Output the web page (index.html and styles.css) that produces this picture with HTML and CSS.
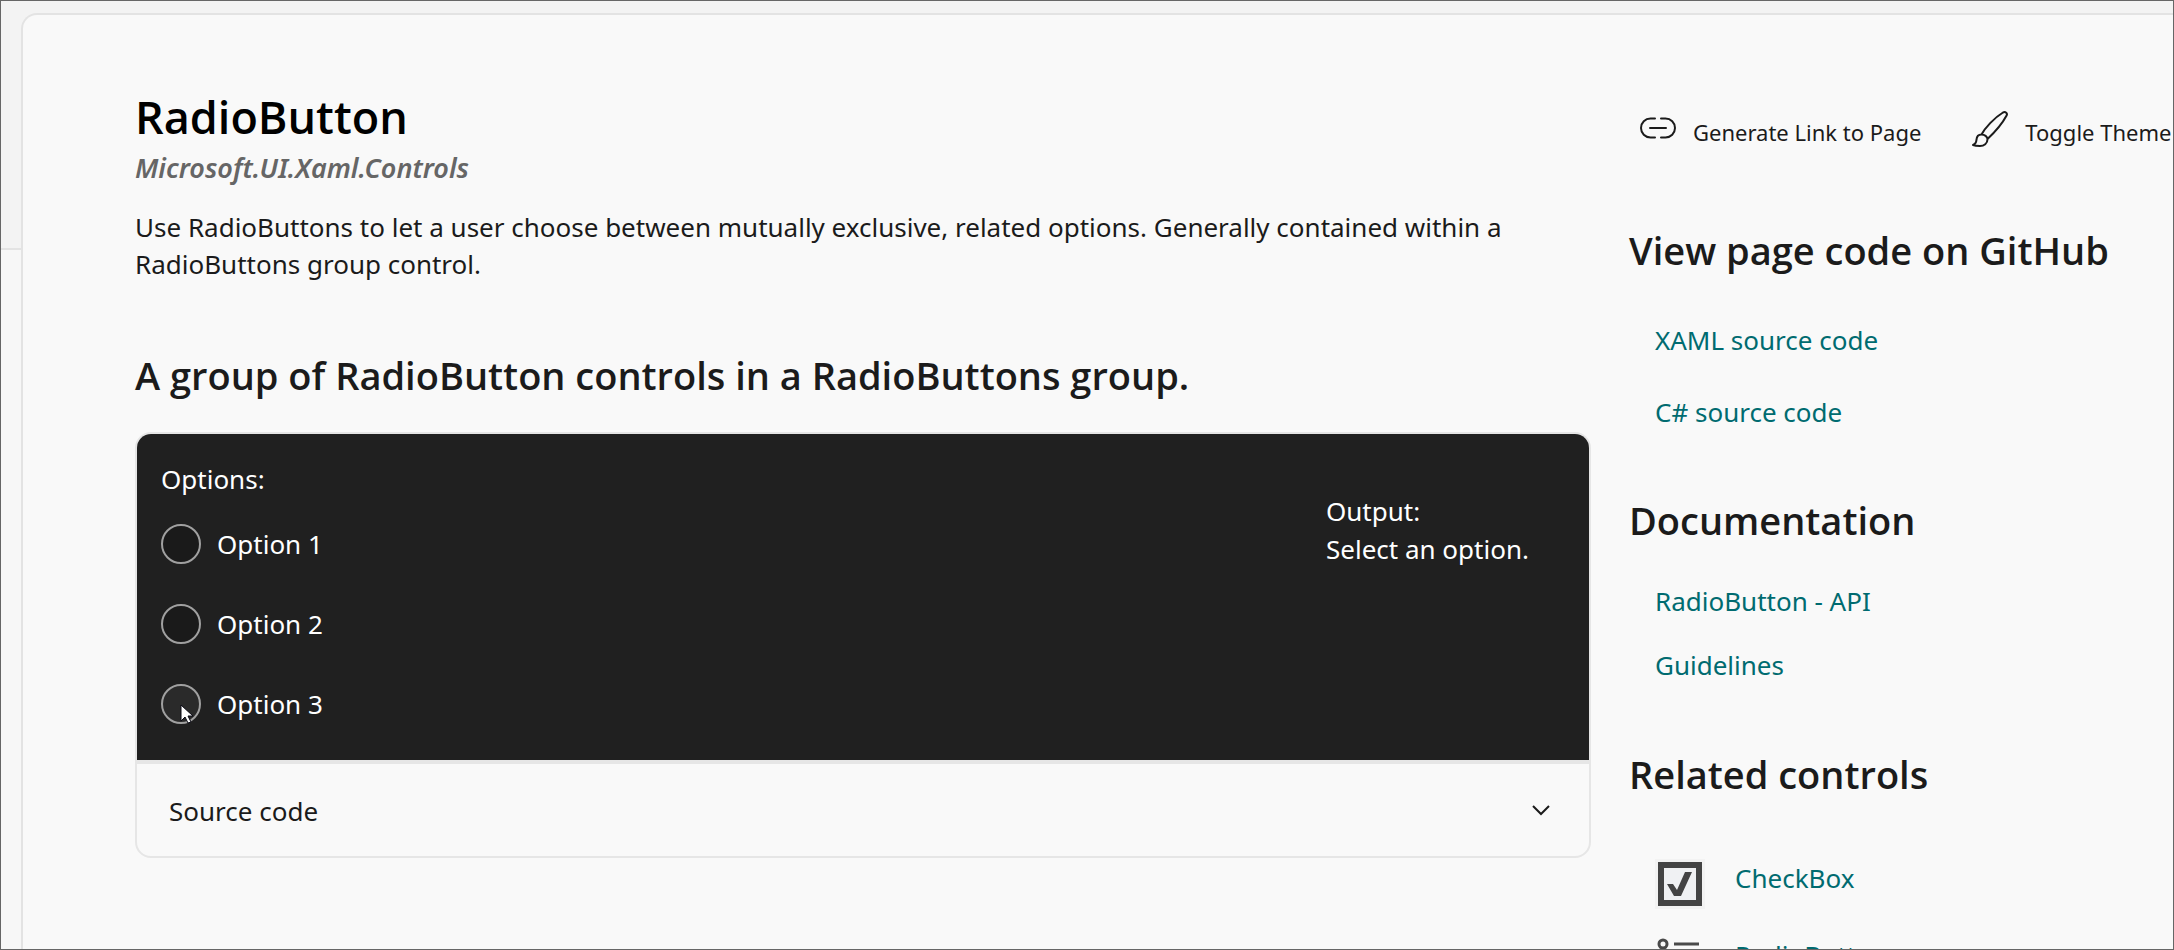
FILE: index.html
```html
<!DOCTYPE html>
<html lang="en">
<head>
    <meta charset="UTF-8">
    <title>RadioButton</title>
    <link rel="stylesheet" href="styles.css">
</head>
<body>

<div class="window">
    <div class="nav-edge"></div>
    <div class="page">
        <main class="content">
            <h1>RadioButton</h1>
            <p class="namespace">Microsoft.UI.Xaml.Controls</p>
            <p class="description">Use RadioButtons to let a user choose between mutually exclusive, related options. Generally contained within a RadioButtons group control.</p>

            <h2 class="example-title">A group of RadioButton controls in a RadioButtons group.</h2>
            <div class="card">
                <div class="example">
                    <fieldset class="options">
                        <legend>Options:</legend>
                        <label class="option"><input type="radio" name="option"> Option 1</label>
                        <label class="option"><input type="radio" name="option"> Option 2</label>
                        <label class="option hover"><input type="radio" name="option"> Option 3
                            <svg class="cursor" width="14" height="21" viewBox="0 0 14 21"><path d="M1 1v16l4-4 3 6 3-1-3-6h5z" fill="#fff" stroke="#0a0a14" stroke-width="1"/></svg>
                        </label>
                    </fieldset>
                    <div class="output">
                        <p>Output:</p>
                        <p>Select an option.</p>
                    </div>
                </div>
                <button class="expander" type="button">
                    <span>Source code</span>
                    <svg width="18" height="12" viewBox="0 0 18 12" fill="none" stroke="#1b1b1b" stroke-width="2"><path d="M1 1l8 8 8-8"/></svg>
                </button>
            </div>
        </main>

        <aside class="sidebar">
            <div class="toolbar">
                <button type="button">
                    <svg width="36" height="36" viewBox="0 0 36 36" fill="none" stroke="#1b1b1b" stroke-width="2" stroke-linecap="round"><path d="M15 7.500h-4.500a9.500 9.500 0 0 0 0 19H15M21 7.500h4.500a9.500 9.500 0 0 1 0 19H21M10 17h16"/></svg>
                    <span>Generate Link to Page</span>
                </button>
                <button type="button">
                    <svg width="36" height="36" viewBox="0 0 36 36" fill="none" stroke="#1b1b1b" stroke-width="2" stroke-linejoin="round"><path d="M9.500 23.500C13 17 22 7 31 1.500c2.500-1.200 4.800.8 3.600 3C30 13 23 21 15.500 28M9.500 23.500c3 0 6 2 6 4.800 0 4.200-3.500 6.700-7.500 6.700-2.500 0-5-.1-7-1 3-1 3.300-3 3.500-5.300.2-3 2-5.200 5-5.200z"/></svg>
                    <span>Toggle Theme</span>
                </button>
            </div>

            <h2>View page code on GitHub</h2>
            <ul class="links source-links">
                <li><a href="#">XAML source code</a></li>
                <li><a href="#">C# source code</a></li>
            </ul>

            <h2>Documentation</h2>
            <ul class="links">
                <li><a href="#">RadioButton - API</a></li>
                <li><a href="#">Guidelines</a></li>
            </ul>

            <h2>Related controls</h2>
            <ul class="links related">
                <li>
                    <svg width="50" height="50" viewBox="0 0 50 50"><path fill="#f3f3f3" d="M0 0h50v50H0z"/><path fill="#f0f1f3" stroke="#444" stroke-width="6" d="M6 6h38v38H6z"/><path fill="#444" d="M12 25h6l4 6 8-18h7L26 37h-7z"/></svg>
                    <a href="#">CheckBox</a>
                </li>
                <li>
                    <svg width="50" height="50" viewBox="0 0 50 50" fill="none" stroke="#4a4a4a" stroke-width="3"><circle cx="8" cy="8" r="4"/><circle cx="8" cy="25" r="4"/><circle cx="8" cy="42" r="4"/><path d="M19 8h25M19 25h25M19 42h25"/></svg>
                    <a href="#">RadioButtons</a>
                </li>
            </ul>
        </aside>
    </div>
</div>

</body>
</html>
```
FILE: styles.css
```css
* {
    box-sizing: border-box;
}
body {
    margin: 0;
    font-family: "Noto Sans", "Open Sans", sans-serif;
    font-size: 26px;
    line-height: 38px;
    color: #1b1b1b;
    background: #f3f3f3;
}
h1, h2, p, ul {
    margin: 0;
    padding: 0;
}
ul {
    list-style: none;
}
svg {
    display: block;
    flex: none;
}
button {
    padding: 0;
    border: 0;
    background: none;
    color: inherit;
    font: inherit;
}
.window {
    display: flex;
    height: 100vh;
    border: 1px solid #666;
    overflow: hidden;
}
.nav-edge {
    width: 20px;
    flex: none;
    margin-top: 247px;
    border-top: 2px solid #e3e3e3;
    background: #f7f7f7;
}
.page {
    flex: 1;
    min-width: 0;
    display: grid;
    grid-template-columns: minmax(0, 1fr) 544px;
    gap: 38px;
    margin-top: 12px;
    padding: 72px 0 0 112px;
    border: 2px solid #e3e3e3;
    border-width: 2px 0 0 2px;
    border-top-left-radius: 16px;
    background: #f9f9f9;
}
h1, h2 {
    font-family: "Open Sans", "Noto Sans", sans-serif;
    font-weight: 600;
}
h1 {
    font-size: 45px;
    line-height: 60px;
    color: #000;
}
h2 {
    font-size: 38px;
    line-height: 50px;
}
.namespace {
    margin-top: 2px;
    font-size: 27px;
    font-weight: 600;
    font-style: italic;
    color: #666;
}
.description {
    margin-top: 22px;
    line-height: 37px;
}
.example-title {
    margin-top: 67px;
}

/* example card */
.card {
    margin-top: 32px;
    border: 2px solid #e6e6e6;
    border-radius: 16px;
    overflow: hidden;
}
.example {
    display: flex;
    justify-content: space-between;
    background: #202020;
    color: #fff;
}
.options {
    margin: 0;
    padding: 26px 0 36px 24px;
    border: 0;
}
.options legend {
    float: left;
    padding: 0;
    margin-bottom: 26px;
}
.option {
    clear: both;
    position: relative;
    display: flex;
    align-items: center;
    gap: 16px;
    height: 40px;
}
.option + .option {
    margin-top: 40px;
}
.option input {
    appearance: none;
    width: 40px;
    height: 40px;
    margin: 0;
    border: 2px solid #a0a0a0;
    border-radius: 50%;
    background: #1a1a1a;
}
.option input:checked {
    border: 12px solid #60cdff;
}
.option.hover input {
    background: #2a2a2a;
}
.cursor {
    position: absolute;
    left: 19px;
    top: 20px;
}
.output {
    width: 263px;
    padding-top: 58px;
}
.expander {
    display: flex;
    justify-content: space-between;
    align-items: center;
    width: 100%;
    padding: 28px 39px 26px 32px;
    border-top: 4px solid #e6e6e6;
}

/* right column */
.toolbar {
    display: flex;
    gap: 51px;
    padding: 24px 0 78px 11px;
    font-size: 22px;
    line-height: 30px;
    white-space: nowrap;
}
.toolbar button {
    display: flex;
    align-items: flex-end;
    gap: 17px;
}
.links {
    display: flex;
    flex-direction: column;
    gap: 26px;
    padding: 37px 0 65px 26px;
}
.source-links {
    gap: 34px;
    padding: 46px 0 64px 26px;
}
.links a {
    color: #006b70;
    text-decoration: none;
}
.related {
    gap: 27px;
    padding-top: 60px;
}
.related li {
    display: flex;
    gap: 30px;
}
```
